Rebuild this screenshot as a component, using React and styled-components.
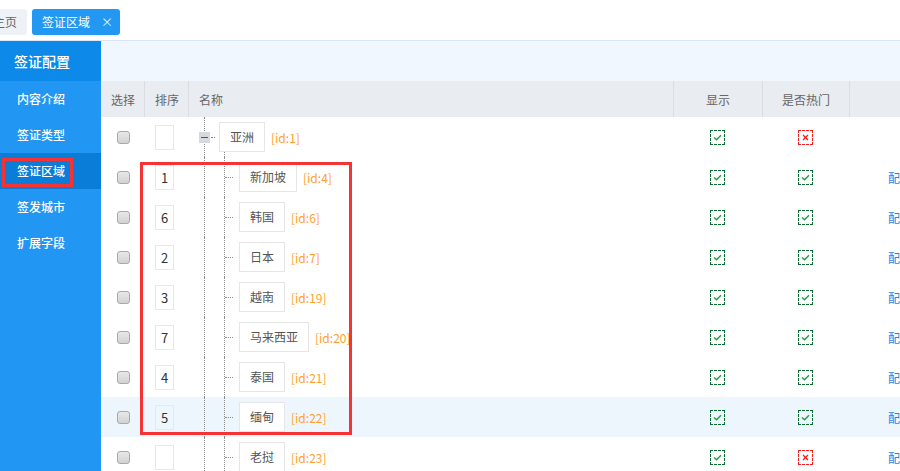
import React from "react";
import styled, { createGlobalStyle, css } from "styled-components";

const GlobalStyle = createGlobalStyle`
  html, body {
    margin: 0;
    padding: 0;
    background: #fff;
    font-family: "Noto Sans CJK SC", "Noto Sans", sans-serif;
  }
  #root {
    height: 471px;
    overflow: hidden;
  }
`;

const Page = styled.div`
  position: relative;
  display: flex;
  flex-direction: column;
  height: 471px;
  overflow: hidden;
`;

const TabBar = styled.div`
  flex: 0 0 41px;
  display: flex;
  align-items: flex-start;
  gap: 5px;
  padding-top: 9px;
  box-sizing: border-box;
  border-bottom: 1px solid #d9e6f5;
  margin-left: -17px;
`;

const Tab = styled.div`
  height: 26px;
  line-height: 26px;
  padding: 0 10px;
  border-radius: 3px;
  font-size: 12px;
  display: flex;
  align-items: center;
  ${(p) =>
    p.$active
      ? css`
          background: #2398f3;
          color: #fff;
          padding-right: 7px;
        `
      : css`
          background: #eef2f7;
          color: #666;
        `}
`;

const Close = styled.span`
  margin-left: 11px;
  font-size: 12px;
  color: #e8f3fe;
`;

const Body = styled.div`
  flex: 1;
  display: flex;
  min-height: 0;
`;

const Sidebar = styled.nav`
  flex: 0 0 101px;
  background: #2196f3;
  color: #fff;
`;

const SideHeader = styled.div`
  height: 40px;
  line-height: 40px;
  padding-left: 14px;
  font-size: 14px;
  background: #0c89e9;
  font-weight: 500;
`;

const MenuItem = styled.div`
  height: 36px;
  line-height: 36px;
  padding-left: 17px;
  font-size: 12px;
  font-weight: 500;
  background: ${(p) => (p.$active ? "#0a7dd8" : "transparent")};
`;

const Main = styled.main`
  flex: 1;
  display: flex;
  flex-direction: column;
  min-width: 0;
`;

const TopBand = styled.div`
  flex: 0 0 40px;
  background: #f0f7fe;
`;

const gridCols = "43px 44px 485px 89px 87px 1fr";

const HeaderRow = styled.div`
  flex-shrink: 0;
  display: grid;
  grid-template-columns: ${gridCols};
  height: 36px;
  background: #e9ecf1;
  color: #666;
  font-size: 12px;
`;

const HeadCell = styled.div`
  display: flex;
  align-items: center;
  justify-content: ${(p) => (p.$center ? "center" : "flex-start")};
  padding-left: ${(p) => (p.$center ? "0" : "10px")};
  border-left: ${(p) => (p.$first ? "none" : "1px solid #dadde2")};
`;

const Row = styled.div`
  flex-shrink: 0;
  display: grid;
  grid-template-columns: ${gridCols};
  height: 40px;
  background: ${(p) => (p.$hover ? "#eef6fd" : "#fff")};
`;

const Cell = styled.div`
  display: flex;
  align-items: center;
  justify-content: ${(p) => (p.$center ? "center" : "flex-start")};
`;

const Check = styled.span`
  width: 13px;
  height: 13px;
  box-sizing: border-box;
  margin-left: 16px;
  border: 1px solid #a9a9a9;
  border-radius: 3px;
  background: linear-gradient(#e8e8e8, #d2d2d2);
`;

const SortBox = styled.span`
  width: 19px;
  height: 25px;
  box-sizing: border-box;
  margin-left: 11px;
  border: 1px solid #e8e8e8;
  font-size: 13px;
  color: #333;
  display: flex;
  align-items: center;
  justify-content: center;
`;

const NameCell = styled(Cell)`
  position: relative;
  padding-left: ${(p) => (p.$root ? "11px" : "37px")};

  &::before {
    content: "";
    position: absolute;
    left: 16px;
    top: 0;
    bottom: 0;
    border-left: 1px dotted #8a8a8a;
  }
  &::after {
    content: "";
    position: absolute;
    left: 36px;
    top: ${(p) => (p.$root ? "35px" : "0")};
    bottom: 0;
    border-left: 1px dotted #8a8a8a;
  }
`;

const Toggle = styled.span`
  position: relative;
  z-index: 1;
  width: 11px;
  height: 11px;
  background: #d6d9de;
  display: flex;
  align-items: center;
  justify-content: center;

  &::before {
    content: "";
    width: 7px;
    height: 1px;
    background: #555;
  }
`;

const Dots = styled.span`
  width: ${(p) => p.$w}px;
  margin: 0 ${(p) => p.$gap}px 0 ${(p) => p.$lead}px;
  border-top: 1px dotted #8a8a8a;
`;

const NameBox = styled.span`
  height: 30px;
  box-sizing: border-box;
  padding: 0 10px;
  border: 1px solid #e6e6e6;
  background: #fff;
  font-size: 12px;
  color: #555;
  line-height: 28px;
`;

const IdTag = styled.span`
  margin-left: 6px;
  font-size: 12px;
  color: #ffa030;
`;

const Flag = styled.span`
  width: 15px;
  height: 15px;
  box-sizing: border-box;
  border: 1px dashed ${(p) => (p.$on ? "#0b6b31" : "#f01c1c")};
  display: flex;
  align-items: center;
  justify-content: center;
`;

const Op = styled.span`
  margin-left: 39px;
  font-size: 12px;
  color: #1e88e5;
  white-space: nowrap;
`;

const Mark = styled.div`
  position: absolute;
  box-sizing: border-box;
  border: 3px solid #f53334;
`;

const FlagIcon = ({ on }) => (
  <Flag $on={on}>
    {on ? (
      <svg width="9" height="7" viewBox="0 0 9 7">
        <path d="M1 3.4 L3.5 5.8 L8 1.2" fill="none" stroke="#2a9a4c" strokeWidth="1.4" />
      </svg>
    ) : (
      <svg width="7" height="7" viewBox="0 0 7 7">
        <path d="M1 1 L6 6 M6 1 L1 6" fill="none" stroke="#f01c1c" strokeWidth="1.3" />
      </svg>
    )}
  </Flag>
);

const rows = [
  { sort: "", name: "亚洲", id: 1, root: true, show: true, hot: false },
  { sort: "1", name: "新加坡", id: 4, show: true, hot: true },
  { sort: "6", name: "韩国", id: 6, show: true, hot: true },
  { sort: "2", name: "日本", id: 7, show: true, hot: true },
  { sort: "3", name: "越南", id: 19, show: true, hot: true },
  { sort: "7", name: "马来西亚", id: 20, show: true, hot: true },
  { sort: "4", name: "泰国", id: 21, show: true, hot: true },
  { sort: "5", name: "缅甸", id: 22, show: true, hot: true, hover: true },
  { sort: "", name: "老挝", id: 23, show: true, hot: false },
];

const menu = ["内容介绍", "签证类型", "签证区域", "签发城市", "扩展字段"];

const App = () => {
  return (
    <Page>
      <GlobalStyle />
      <TabBar>
        <Tab>主页</Tab>
        <Tab $active>
          签证区域<Close>×</Close>
        </Tab>
      </TabBar>
      <Body>
        <Sidebar>
          <SideHeader>签证配置</SideHeader>
          {menu.map((m) => (
            <MenuItem key={m} $active={m === "签证区域"}>
              {m}
            </MenuItem>
          ))}
        </Sidebar>
        <Main>
          <TopBand />
          <HeaderRow>
            <HeadCell $first>选择</HeadCell>
            <HeadCell>排序</HeadCell>
            <HeadCell>名称</HeadCell>
            <HeadCell $center>显示</HeadCell>
            <HeadCell $center>是否热门</HeadCell>
            <HeadCell />
          </HeaderRow>
          {rows.map((r) => (
            <Row key={r.id} $hover={r.hover}>
              <Cell>
                <Check />
              </Cell>
              <Cell>
                <SortBox>{r.sort}</SortBox>
              </Cell>
              <NameCell $root={r.root}>
                {r.root ? (
                  <>
                    <Toggle />
                    <Dots $w={4} $lead={1} $gap={4} />
                  </>
                ) : (
                  <Dots $w={8} $lead={0} $gap={6} />
                )}
                <NameBox>{r.name}</NameBox>
                <IdTag>[id:{r.id}]</IdTag>
              </NameCell>
              <Cell $center>
                <FlagIcon on={r.show} />
              </Cell>
              <Cell $center>
                <FlagIcon on={r.hot} />
              </Cell>
              <Cell>{!r.root && <Op>配置</Op>}</Cell>
            </Row>
          ))}
        </Main>
      </Body>
      <Mark style={{ left: 2, top: 158, width: 71, height: 29 }} />
      <Mark style={{ left: 140, top: 162, width: 212, height: 273 }} />
    </Page>
  );
};

export default App;
